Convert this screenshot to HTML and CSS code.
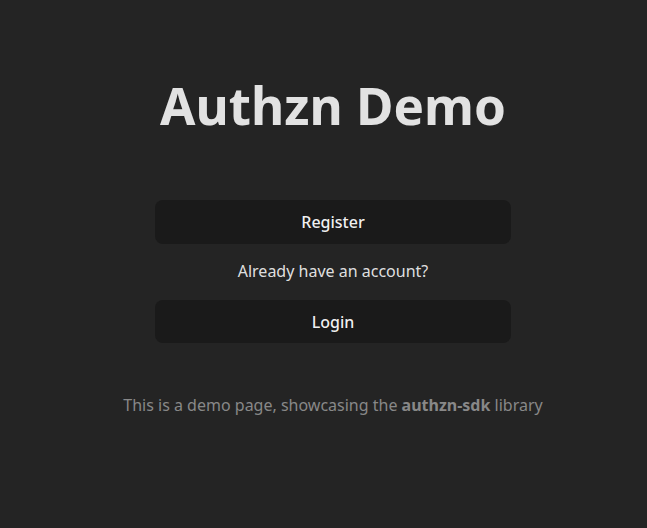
FILE: index.html
```html
<!DOCTYPE html>
<html lang="en">
<head>
<meta charset="utf-8">
<title>Authzn Demo</title>
<link rel="stylesheet" href="styles.css">
</head>
<body>
<main class="app">
  <h1 class="title">Authzn Demo</h1>
  <div class="actions">
    <button class="btn" type="button">Register</button>
    <p class="hint">Already have an account?</p>
    <button class="btn" type="button">Login</button>
  </div>
  <p class="footer">This is a demo page, showcasing the <strong>authzn-sdk</strong> library</p>
</main>
</body>
</html>
```

FILE: styles.css
```css
html, body {
  margin: 0;
  padding: 0;
  background: #242424;
}
body {
  font-family: "Noto Sans", "Open Sans", sans-serif;
  color: rgba(255, 255, 255, 0.87);
  font-size: 16px;
  line-height: 1.5;
  min-height: 528px;
}
.app {
  display: flex;
  flex-direction: column;
  align-items: center;
  padding-top: 77px;
  padding-left: 19px;
  text-align: center;
}
.title {
  margin: 0;
  font-size: 51.2px;
  line-height: 1.1;
  font-weight: 700;
}
.actions {
  width: 356px;
  display: flex;
  flex-direction: column;
  margin-top: 67px;
}
.btn {
  font-family: inherit;
  font-size: 16px;
  font-weight: 500;
  line-height: 1.5;
  color: rgba(255, 255, 255, 0.95);
  background: #1a1a1a;
  border: 1px solid transparent;
  border-radius: 8px;
  height: 43.5px;
  padding: 0 19px;
  cursor: pointer;
}
.hint {
  margin: 15.5px 0 16.5px;
}
.footer {
  margin: 50px 0 0;
  color: #888;
}
.footer strong {
  font-weight: 700;
}
```
